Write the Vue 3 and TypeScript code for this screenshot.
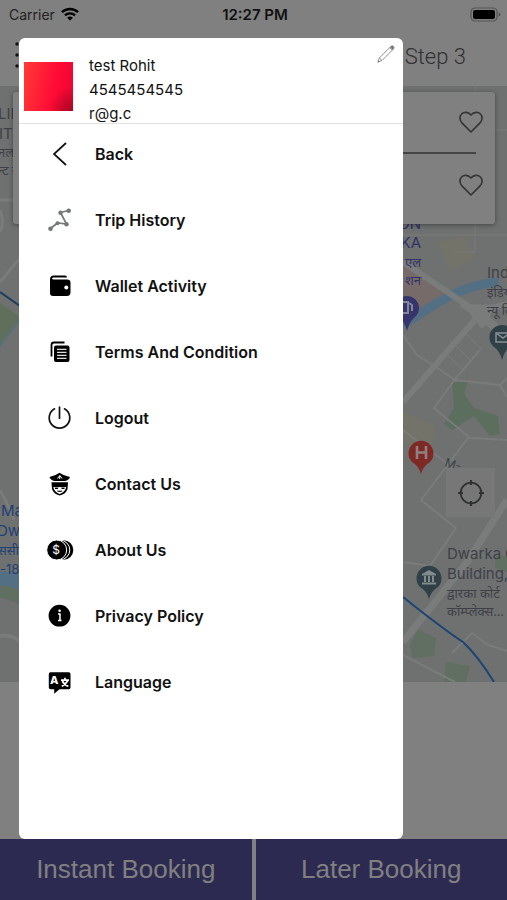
<script setup lang="ts">
import { ref } from 'vue'

type IconName = 'back' | 'trip' | 'wallet' | 'terms' | 'power' | 'officer' | 'coins' | 'info' | 'language'

interface MenuItem {
  label: string
  icon: IconName
}

const user = { name: 'test Rohit', phone: '4545454545', email: 'r@g.c' }

const items: MenuItem[] = [
  { label: 'Back', icon: 'back' },
  { label: 'Trip History', icon: 'trip' },
  { label: 'Wallet Activity', icon: 'wallet' },
  { label: 'Terms And Condition', icon: 'terms' },
  { label: 'Logout', icon: 'power' },
  { label: 'Contact Us', icon: 'officer' },
  { label: 'About Us', icon: 'coins' },
  { label: 'Privacy Policy', icon: 'info' },
  { label: 'Language', icon: 'language' },
]

const favourites = ref<boolean[]>([false, false])
const toggle = (i: number): void => {
  favourites.value[i] = !favourites.value[i]
}
</script>

<template>
  <div class="screen">
    <div class="status">
      <div class="carrier">
        <span>Carrier</span>
        <svg width="18" height="14" viewBox="0 0 18 14" aria-hidden="true">
          <path d="M1 5.2a11.5 11.5 0 0 1 16 0" fill="none" stroke="#000" stroke-width="2.5" />
          <path d="M4 8.4a7.2 7.2 0 0 1 10 0" fill="none" stroke="#000" stroke-width="2.4" />
          <path d="M6.2 10.8a4 4 0 0 1 5.600 0L9 13.800z" />
        </svg>
      </div>
      <time class="clock">12:27 PM</time>
      <div class="battery">
        <svg width="31" height="15" viewBox="0 0 31 15" aria-hidden="true">
          <rect x="1" y="1" width="26" height="13" rx="4" fill="none" stroke="#555" stroke-width="1.200" />
          <rect x="3" y="3" width="22" height="9" rx="2" />
          <path d="M28.500 5.200q2 .8 2 2.300t-2 2.300z" fill="#555" />
        </svg>
      </div>
    </div>

    <header class="topbar">
      <svg width="28" height="28" viewBox="0 0 28 28" aria-hidden="true">
        <g fill="#111"><circle cx="2" cy="2" r="1.700" /><circle cx="2" cy="13" r="1.700" /><circle cx="2" cy="24" r="1.700" /></g>
        <path d="M7 2h20M7 13h20M7 24h20" stroke="#111" stroke-width="3" />
      </svg>
      <h1>Step 3</h1>
    </header>

    <main class="map">
      <svg class="canvas" viewBox="0 86 507 596" preserveAspectRatio="xMidYMid slice" aria-label="Map">
        <rect y="86" width="507" height="596" fill="#6f7070" />
        <path d="M403 262l45 30-22 24-23-8z" fill="#776b69" />
        <path d="M438 242l26-6 12 22-26 14zM403 412l32 14-4 24-28-6z" fill="#737369" />
        <path d="M452 382l16 0-4 12 10 14 24 8 2 18-10 2-16-20-22 14-8-6 10-16z" fill="#5c6f5e" />
        <path d="M418 630l18 8-2 18-22 2-2-14zM446 662l24 4-4 16h-22zM496 556h11v16l-12-4z" fill="#606f61" />
        <path d="M403 325q38-26 58-34t38-9" fill="none" stroke="#526f84" stroke-width="9" />
        <g fill="none" stroke="#7a7b7b" stroke-linejoin="round">
          <path d="M403 130h104M475 86v166h-20M403 235h104" stroke-width="1" />
          <path d="M403 262l77 52M480 314L403 402M507 304l-32 8-14-8" stroke-width="6" />
          <path d="M470 308h20l-8 16z" fill="#7a7b7b" stroke-width="7" />
          <path d="M480 314l27 24" stroke-width="9" />
          <path d="M403 335l14 20 22 14 16 11 45 5M480 350l-24 28-22 30 36 30 37 2M468 438l-47 62 35 28-26 38-27-4M403 430l50 38M500 385l7-7M500 385l7 12" stroke-width="2" />
          <path d="M507 500l-40 62-64 80" stroke-width="7" />
          <path d="M403 655l52 27M472 633l16 12 19 6M472 633l-20 20" stroke-width="2" />
          <path d="M450 340l22 22M444 352l20 18M462 330l20 20" stroke-width="1" />
        </g>
        <path d="M403 597q40 32 60 45 15 14 31 40" fill="none" stroke="#1c4474" stroke-width="2" />

        <path d="M0 303l20 14v2L0 344z" fill="#5f6f5c" />
        <path d="M0 346l20-26" fill="none" stroke="#56717e" stroke-width="2" />
        <path d="M0 292l20 14" stroke="#1c3c5e" stroke-width="2" />
        <path d="M0 282l20-24M0 200h20M0 210q5 14 0 22M0 490q6 10 14 30" fill="none" stroke="#7a7b7b" stroke-width="3" />
        <path d="M0 572q10-2 20 3v16q-10-6-20-5z" fill="#526f84" />
        <path d="M0 586q10-1 20 5v14q-10-6-20-7z" fill="#606f60" />
        <path d="M0 636q10-2 20 5" stroke="#7a7b7b" stroke-width="4" fill="none" />

        <g class="label" fill="#3d4147">
          <text x="-2" y="119">LIN</text>
          <text x="-1" y="139">IT</text>
          <text class="hindi" x="-2" y="157">नल</text>
          <text class="hindi" x="-2" y="175">न्ट न</text>
          <text x="487" y="278">Indian</text>
          <text class="hindi" x="487" y="297">इंडियन</text>
          <text class="hindi" x="487" y="315">न्यू दि</text>
          <text x="447" y="559">Dwarka</text><text x="505" y="559">C</text>
          <text x="447" y="579">Building,</text>
          <text class="hindi" x="447" y="598">द्वारका कोर्ट</text>
          <text class="hindi" x="447" y="616">कॉम्प्लेक्स...</text>
          <text class="road" x="444" y="466" transform="rotate(18 444 466)">M-</text>
        </g>
        <g class="label" fill="#1f3f75">
          <text x="1" y="516">Ma</text>
          <text x="-3" y="536">Dw</text>
          <text class="hindi" x="-2" y="555">ससी</text>
          <text class="code" x="0" y="574">-18</text>
        </g>
        <g class="label" fill="#323268" text-anchor="end">
          <text x="421" y="229">ON</text>
          <text x="421" y="248">KA</text>
          <text class="hindi" x="421" y="267">एल</text>
          <text class="hindi" x="421" y="285">शन</text>
        </g>

        <path d="M407 331q-2-9-8-14a12 12 0 1 1 16 0q-6 5-8 14z" fill="#35346d" />
        <path d="M402 302h6v11h-6zM409 303l3 2v6" fill="none" stroke="#858598" stroke-width="2" />
        <path d="M421 474q-2-8-9-12a12.500 12.500 0 1 1 18 0q-7 4-9 12z" fill="#7f2926" />
        <path d="M417 446v13M426 446v13M417 452.500h9" stroke="#8d8181" stroke-width="2.600" />
        <path d="M502 360q-2-9-8-13a12.500 12.500 0 1 1 16 0q-6 4-8 13z" fill="#2f4046" />
        <path d="M496 333h14v9h-14zM496 333l7 5 7-5" fill="none" stroke="#899094" stroke-width="1.500" />
        <path d="M429 599q-2-8-9-12a12.500 12.500 0 1 1 18 0q-7 4-9 12z" fill="#2f4046" />
        <path d="M422 574l7-4 7 4v1.500h-14zM422 582.500h14v2h-14zM424 576h2v6h-2zM428 576h2v6h-2zM432 576h2v6h-2z" fill="#848b8d" />
      </svg>

      <section class="places" aria-label="Trip addresses">
        <div v-for="(saved, i) in favourites" :key="i" class="place">
          <button type="button" aria-label="Save address" :aria-pressed="saved" @click="toggle(i)">
            <svg width="24" height="22" viewBox="0 0 24 22" aria-hidden="true">
              <path d="M12 21L3.200 12.200C.5 9.400.2 5.500 2.600 3c2.500-2.500 6.500-2 9.400 1 2.900-3 6.900-3.500 9.400-1 2.400 2.500 2.100 6.400-.6 9.200z" fill="none" stroke="#363636" stroke-width="1.700" stroke-linejoin="round" />
            </svg>
          </button>
        </div>
      </section>

      <button class="locate" type="button" aria-label="Locate me">
        <svg width="28" height="28" viewBox="0 0 28 28" aria-hidden="true">
          <circle cx="14" cy="14" r="10.300" fill="none" stroke="#303232" stroke-width="1.800" />
          <path d="M14 1v5M14 22v5M1 14h5M22 14h5" stroke="#303232" stroke-width="2.200" />
        </svg>
      </button>
    </main>

    <footer class="actions">
      <button type="button">Instant Booking</button>
      <button type="button">Later Booking</button>
    </footer>

    <aside class="drawer" aria-label="Menu">
      <div class="profile">
        <div class="avatar" role="img" aria-label="Profile picture"></div>
        <div class="details">
          <p>{{ user.name }}</p>
          <p>{{ user.phone }}</p>
          <p>{{ user.email }}</p>
        </div>
        <button class="edit" type="button" aria-label="Edit profile">
          <svg width="18" height="18" viewBox="0 0 18 18" aria-hidden="true">
            <path d="M.8 17.200l1.500-4.200L14 1.300q1.300-1 2.400.1t.2 2.400L5 15.500zM12.600 2.700l2.600 2.600M2.300 13L5 15.500" fill="none" stroke="#777" stroke-width=".8" />
            <path d="M14 1.300q1.300-1 2.400.1t.2 2.400l-1 1-2.600-2.600zM.8 17.200l.7-2 1.300 1.300z" fill="#777" />
          </svg>
        </button>
      </div>

      <nav class="menu">
        <button v-for="item in items" :key="item.label" type="button" class="row">
          <svg width="28" height="28" viewBox="0 0 28 28" aria-hidden="true">
            <path v-if="item.icon === 'back'" d="M20 3L8 14l12 11" fill="none" stroke="#111" stroke-width="1.700" />
            <g v-else-if="item.icon === 'trip'" fill="#747878" stroke="#747878">
              <path d="M4.500 22.500l7-5.500 9 1-6-11.500 8-2" fill="none" stroke-width="1.700" />
              <g stroke="none">
                <circle cx="4.500" cy="22.700" r="2.300" /><circle cx="11.500" cy="17.200" r="2" /><circle cx="20.500" cy="18.200" r="2.200" />
                <circle cx="14.500" cy="6.700" r="2.200" /><circle cx="22.700" cy="4.700" r="2.300" />
              </g>
            </g>
            <g v-else-if="item.icon === 'wallet'">
              <path d="M4 7.500q0-4 4-4h11q2 0 2 2H8q-2 0-2 1t2 1h13q3.500 0 3.500 3V20q0 4-3.500 4H7q-3 0-3-3z" />
              <circle cx="20.300" cy="15.500" r="2" fill="#fff" />
            </g>
            <g v-else-if="item.icon === 'terms'">
              <path d="M5.500 18.500V7q0-2.500 2.500-2.500h10.500" fill="none" stroke="#000" stroke-width="1.800" />
              <rect x="8" y="7.500" width="15.500" height="16.500" rx="2" />
              <path d="M11 11.300h9.500M11 14.300h9.500M11 17.300h9.500M11 20.300h9.500" stroke="#ddd" stroke-width="1.200" />
            </g>
            <path v-else-if="item.icon === 'power'" d="M8.500 4.800a10.300 10.300 0 1 0 10 0M13.500 3.200v11" fill="none" stroke="#111" stroke-width="1.700" stroke-linecap="round" />
            <g v-else-if="item.icon === 'officer'">
              <path d="M3.500 7q6-1.200 10-4.200Q17.500 5.800 24 7q-1 3.200-5 4H8.500Q4.500 10.200 3.500 7z" />
              <path d="M5.500 12.200H22l-.5 6.800q-1.500 5-7.800 6.500Q7.500 24 6 19z" />
              <path d="M7.300 16.800q2.700 1 6.400.2 3.700.8 6.500-.2-.5 5-6.500 7.200-5.900-2.200-6.400-7.200z" fill="#fff" />
              <path d="M9 18.300h3M15.500 18.300h3M11.300 21q2.400.8 4.800 0" fill="none" stroke="#000" stroke-width="1.200" />
              <path d="M11.500 8.500l2.300-3 2.300 3M13.700 6v3" fill="none" stroke="#fff" stroke-width="1" />
            </g>
            <g v-else-if="item.icon === 'coins'">
              <circle cx="17.500" cy="14" r="9.800" />
              <circle cx="14" cy="14" r="9.800" stroke="#fff" stroke-width="1" />
              <circle cx="10.700" cy="14" r="10" stroke="#fff" stroke-width="1" />
              <text class="glyph coin" x="10" y="18" text-anchor="middle">$</text>
            </g>
            <g v-else-if="item.icon === 'info'">
              <circle cx="13.500" cy="13.700" r="10.900" />
              <path d="M12 12h2v6.500M12 18.500h3.500" fill="none" stroke="#fff" stroke-width="1.500" />
              <circle cx="13.600" cy="8.800" r="1.300" fill="#fff" />
            </g>
            <g v-else>
              <path d="M4.500 4.200h18.300q1.700 0 1.700 1.800v13.500q0 1.700-1.700 1.700h-9.300L8.200 25.800v-4.600H4.500q-1.700 0-1.700-1.700V6q0-1.800 1.700-1.800z" />
              <text class="glyph letter" x="8.300" y="15.700" text-anchor="middle">A</text>
              <path d="M15 12.200h8M19 9.800v2.400M21.800 12.500q-2 4-6 5.700M16.300 13q2 4 6 5.200" fill="none" stroke="#fff" stroke-width="1.700" />
            </g>
          </svg>
          <span>{{ item.label }}</span>
        </button>
      </nav>
    </aside>
  </div>
</template>

<style>
body {
  margin: 0;
  background: #808080;
}
</style>

<style scoped>
.screen {
  position: relative;
  display: flex;
  flex-direction: column;
  min-height: 100vh;
  background: #808080;
  color: #111;
  font-family: Inter, "Liberation Sans", sans-serif;
}

button {
  margin: 0;
  padding: 0;
  border: 0;
  background: none;
  color: inherit;
  font: inherit;
  cursor: pointer;
}

svg {
  display: block;
  flex: none;
}

.status {
  display: grid;
  grid-template-columns: 1fr auto 1fr;
  align-items: center;
  height: 28px;
  padding: 0 6px 0 9px;
  font-size: 15px;
}

.carrier {
  display: flex;
  align-items: center;
  gap: 6px;
  color: #222;
  font-size: 14px;
}

.clock {
  font-weight: 600;
}

.battery {
  justify-self: end;
}

.topbar {
  display: flex;
  align-items: center;
  justify-content: space-between;
  height: 56px;
  padding: 0 41px 2px 15px;
}

.topbar h1 {
  margin: 0;
  color: #303030;
  font-family: Roboto, sans-serif;
  font-size: 22px;
  font-weight: 300;
}

.map {
  position: relative;
  aspect-ratio: 507 / 596;
}

.canvas {
  position: absolute;
  width: 100%;
  height: 100%;
}

.label {
  font-size: 15px;
}

.hindi {
  font-family: "Noto Sans", "Noto Sans Devanagari", sans-serif;
  font-size: 13px;
}

.code {
  font-size: 13px;
}

.road {
  font-size: 12px;
}

.places {
  position: absolute;
  inset: 6px 12px auto 13px;
  padding: 0 19px;
  border-radius: 3px;
  background: #808080;
  box-shadow: 0 1px 5px rgba(0, 0, 0, 0.4);
}

.place {
  display: flex;
  align-items: center;
  justify-content: flex-end;
  height: 60px;
}

.place:last-child {
  height: 62px;
  padding-bottom: 8px;
  border-top: 2px solid #454545;
}

.place button {
  margin-right: -7px;
}

.locate {
  position: absolute;
  top: 382px;
  right: 12px;
  display: grid;
  place-items: center;
  width: 49px;
  height: 49px;
  background: #777;
}

.actions {
  display: grid;
  grid-template-columns: 1fr 1fr;
  gap: 4px;
  height: 61px;
  margin-top: auto;
}

.actions button {
  background: #2d2a52;
  color: #808080;
  font-family: "Liberation Sans", Arial, sans-serif;
  font-size: 26px;
}

.drawer {
  position: absolute;
  inset: 38px 104px 61px 19px;
  overflow: auto;
  border-radius: 6px;
  background: #fff;
}

.profile {
  display: flex;
  align-items: flex-start;
  gap: 16px;
  box-sizing: border-box;
  height: 86px;
  padding: 16px 8px 0 5px;
  border-bottom: 1px solid #e2e2e2;
}

.avatar {
  width: 49px;
  height: 49px;
  margin-top: 8px;
  background: radial-gradient(circle at 100% 100%, #a80724 0, rgba(220, 0, 40, 0) 35%), linear-gradient(100deg, #ff3b36, #ff0b36 60%, #ee0432);
}

.details {
  flex: 1;
  font-size: 15px;
  line-height: 24px;
}

.details p {
  margin: 0;
}

.edit {
  margin-top: -9px;
}

.menu {
  display: flex;
  flex-direction: column;
  gap: 6px;
}

.row {
  display: flex;
  align-items: center;
  gap: 21px;
  height: 60px;
  padding: 0 27px;
  font-size: 16px;
  font-weight: 600;
  text-align: left;
}

.glyph {
  fill: #fff;
  font-family: Inter, sans-serif;
}

.coin {
  font-size: 12px;
  font-weight: 400;
}

.letter {
  font-size: 11px;
  font-weight: 800;
}
</style>
